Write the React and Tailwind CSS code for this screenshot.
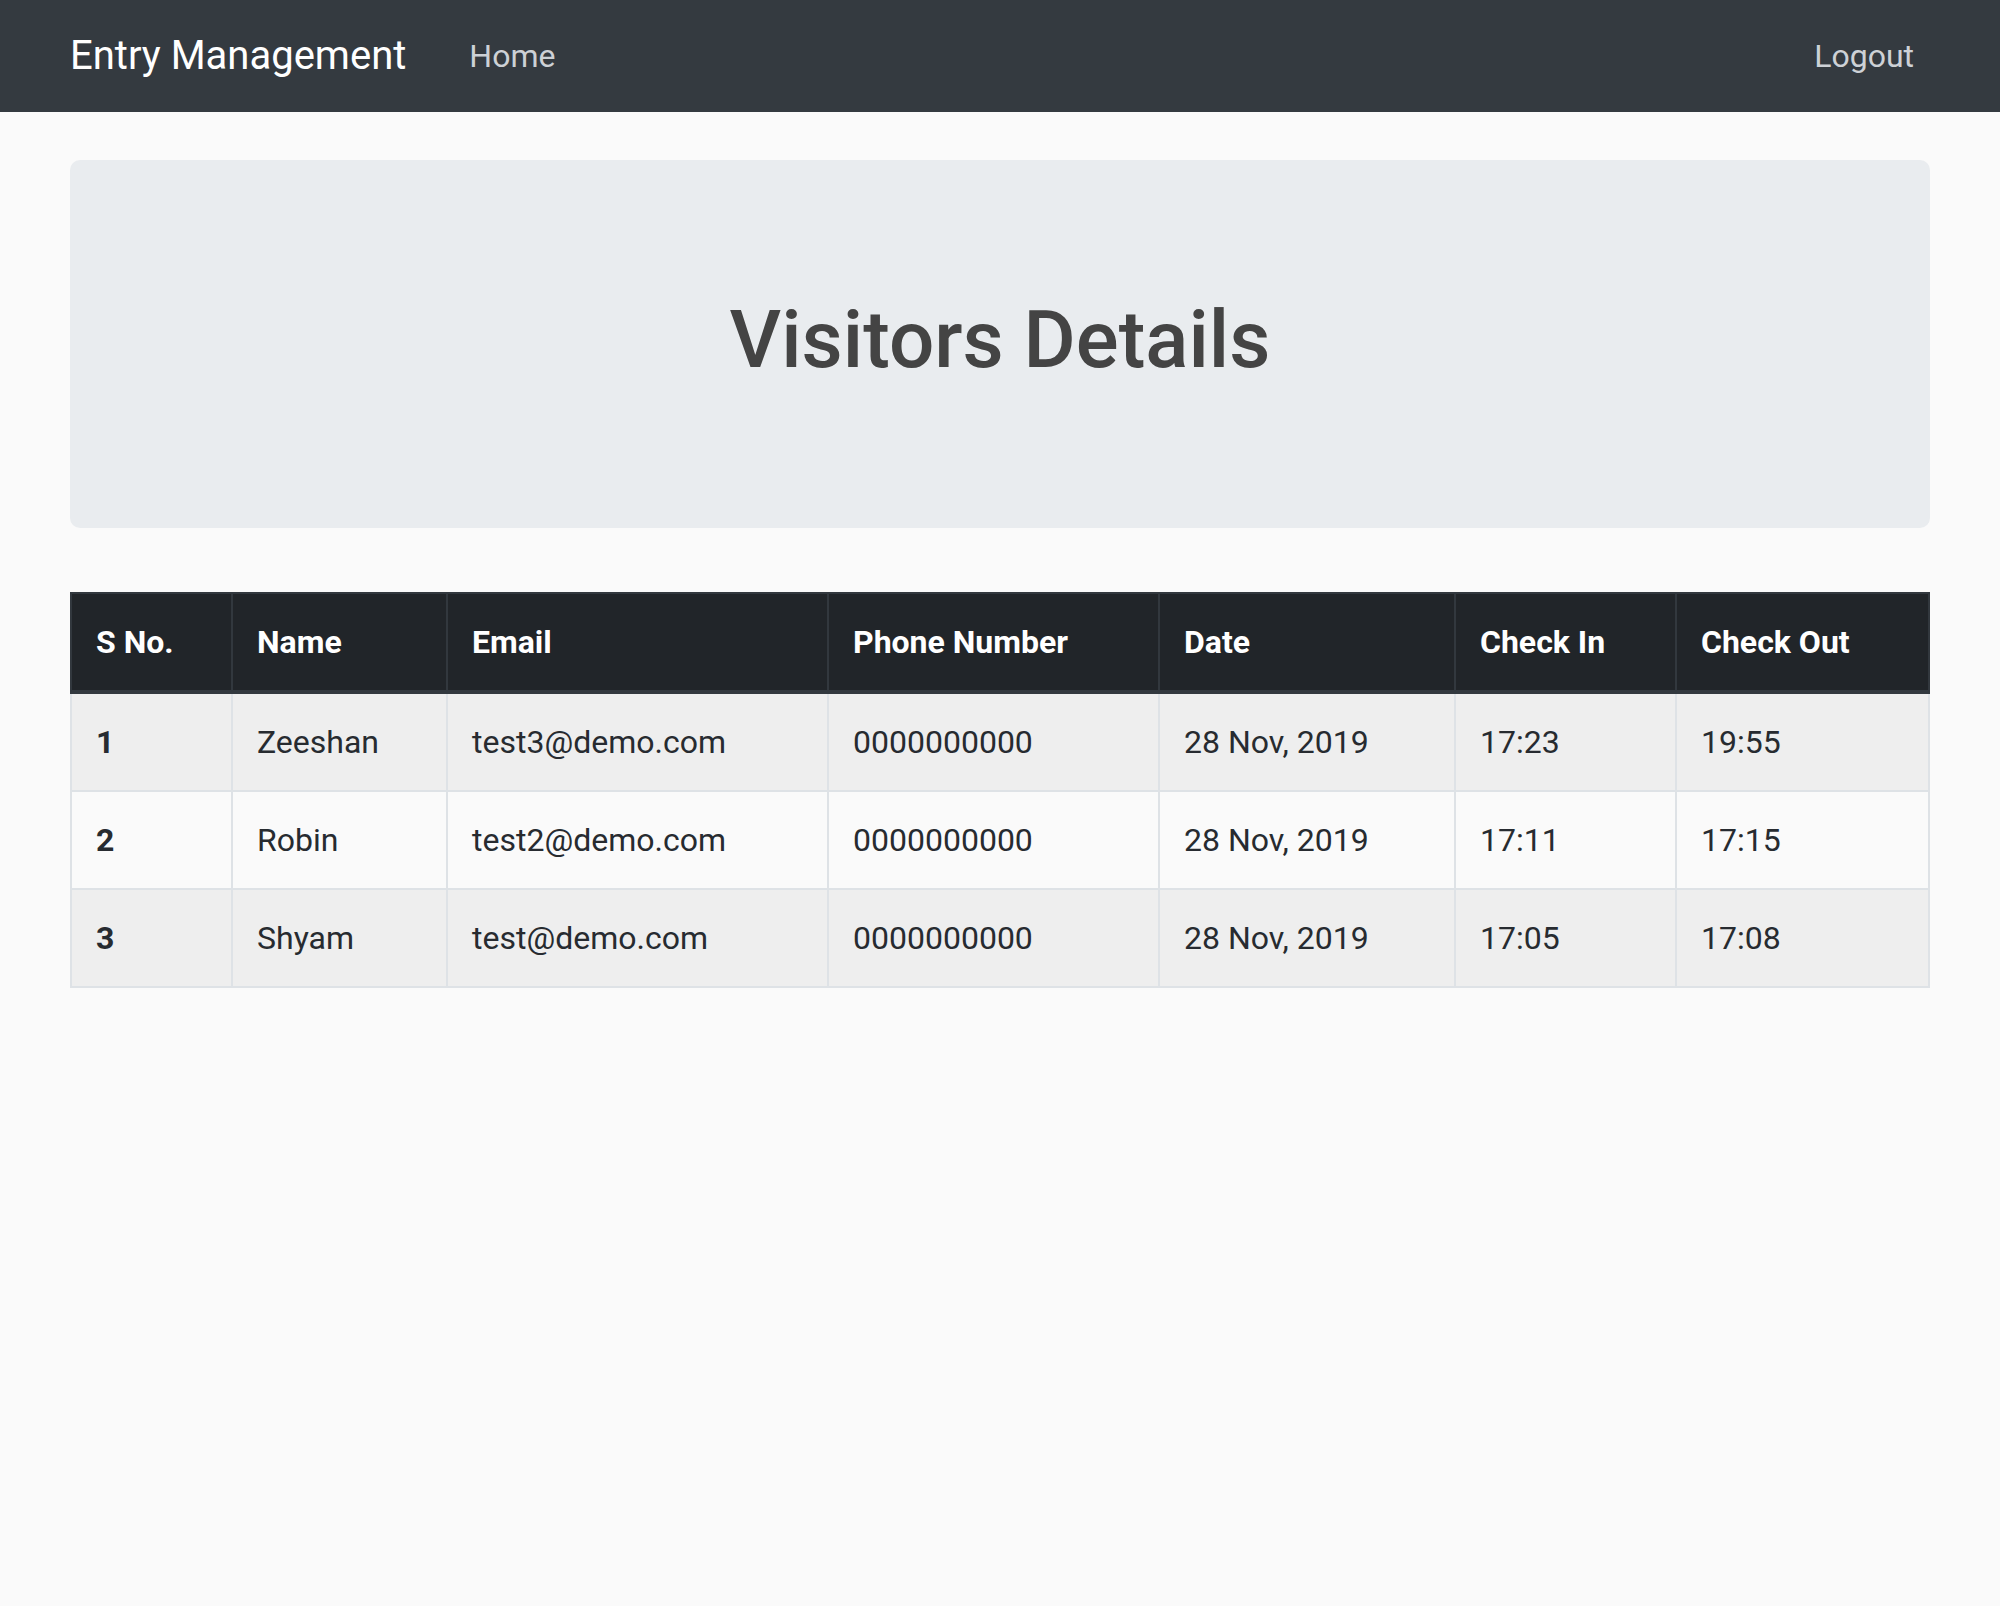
import React from 'react';

const visitors = [
  { id: 1, name: 'Zeeshan', email: 'test3@demo.com', phone: '0000000000', date: '28 Nov, 2019', checkIn: '17:23', checkOut: '19:55' },
  { id: 2, name: 'Robin', email: 'test2@demo.com', phone: '0000000000', date: '28 Nov, 2019', checkIn: '17:11', checkOut: '17:15' },
  { id: 3, name: 'Shyam', email: 'test@demo.com', phone: '0000000000', date: '28 Nov, 2019', checkIn: '17:05', checkOut: '17:08' },
];

const columns = [
  { label: 'S No.', width: 'w-[161px]' },
  { label: 'Name', width: 'w-[215px]' },
  { label: 'Email', width: 'w-[381px]' },
  { label: 'Phone Number', width: 'w-[331px]' },
  { label: 'Date', width: 'w-[296px]' },
  { label: 'Check In', width: 'w-[221px]' },
  { label: 'Check Out', width: '' },
];

const Navbar = () => (
  <nav className="flex h-[112px] items-center justify-between bg-[#343a40] px-[70px]">
    <div className="flex items-center">
      <a href="#" className="mr-[47px] py-[10px] text-[40px] leading-[60px] text-white">
        Entry Management
      </a>
      <a href="#" className="px-4 text-[32px] leading-[48px] text-[#cdd1d6]">
        Home
      </a>
    </div>
    <a href="#" className="px-4 text-[32px] leading-[48px] text-[#cdd1d6]">
      Logout
    </a>
  </nav>
);

const App = () => {
  return (
    <div className="min-h-screen bg-[#fafafa] text-[#272b30]" style={{ fontFamily: 'Roboto, "Noto Sans", sans-serif' }}>
      <Navbar />

      <div className="px-[70px]">
        {/* Jumbotron */}
        <div className="mt-[48px] mb-[64px] rounded-[10px] bg-[#e9ecef] px-16 pt-[132px] pb-[124px] text-center">
          <h1 className="mb-4 text-[80px] leading-[96px] font-medium text-[#444444]">Visitors Details</h1>
        </div>

        <table className="w-full table-fixed border-collapse text-[32px] leading-[48px]">
          <thead>
            <tr className="bg-[#212529] text-white">
              {columns.map((col) => (
                <th
                  key={col.label}
                  className={`${col.width} border-2 border-b-4 border-[#32383e] p-[24px] text-left font-bold`}
                >
                  {col.label}
                </th>
              ))}
            </tr>
          </thead>
          <tbody>
            {visitors.map((v, i) => (
              <tr key={v.id} className={i % 2 === 0 ? 'bg-[#eeeeee]' : 'bg-[#fafafa]'}>
                <td className="border-2 border-[#dee2e6] p-[24px] font-bold">{v.id}</td>
                <td className="border-2 border-[#dee2e6] p-[24px]">{v.name}</td>
                <td className="border-2 border-[#dee2e6] p-[24px]">{v.email}</td>
                <td className="border-2 border-[#dee2e6] p-[24px]">{v.phone}</td>
                <td className="border-2 border-[#dee2e6] p-[24px]">{v.date}</td>
                <td className="border-2 border-[#dee2e6] p-[24px]">{v.checkIn}</td>
                <td className="border-2 border-[#dee2e6] p-[24px]">{v.checkOut}</td>
              </tr>
            ))}
          </tbody>
        </table>
      </div>
    </div>
  );
};

export default App;
